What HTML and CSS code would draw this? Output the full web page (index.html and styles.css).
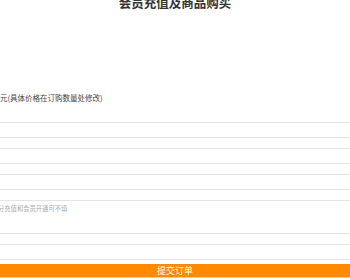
FILE: index.html
```html
<!DOCTYPE html>
<html lang="zh-CN">
<head>
  <meta charset="UTF-8">
  <title>会员充值及商品购买</title>
  <link rel="stylesheet" href="styles.css">
</head>
<body>

<h1 class="title">会员充值及商品购买</h1>

<div class="note">元(具体价格在订购数量处修改)</div>

<div class="fields">
  <div class="field"></div>
  <div class="field"></div>
  <div class="field"></div>
  <div class="field field-tall"><span class="hint">分充值和会员开通可不填</span></div>
  <div class="field"></div>
</div>

<div class="submit">提交订单</div>

</body>
</html>
```

FILE: styles.css
```css
body { margin: 0; font-family: "Noto Sans CJK SC", "Noto Sans", sans-serif; background: #fff; overflow: hidden; }
.title { margin: -4px 0 0; font-size: 12.5px; line-height: 14px; font-weight: bold; text-align: center; color: #333; }
.note { margin-top: 83px; font-size: 7.5px; line-height: 10px; color: #444; white-space: nowrap; }
.fields { margin-top: 19px; }
.field { height: 14px; margin-bottom: 10px; border-top: 1px solid #e3e3e3; border-bottom: 1px solid #e3e3e3; }
.field-tall { height: 32px; }
.hint { display: block; margin-left: -2px; padding-top: 4px; font-size: 6.3px; line-height: 8px; color: #aaa; white-space: nowrap; }
.submit { margin-top: -6px; height: 13px; line-height: 13px; background: #ff8a00; border-bottom: 1px solid #ffc98a; color: #fff; font-size: 9px; text-align: center; }
```
